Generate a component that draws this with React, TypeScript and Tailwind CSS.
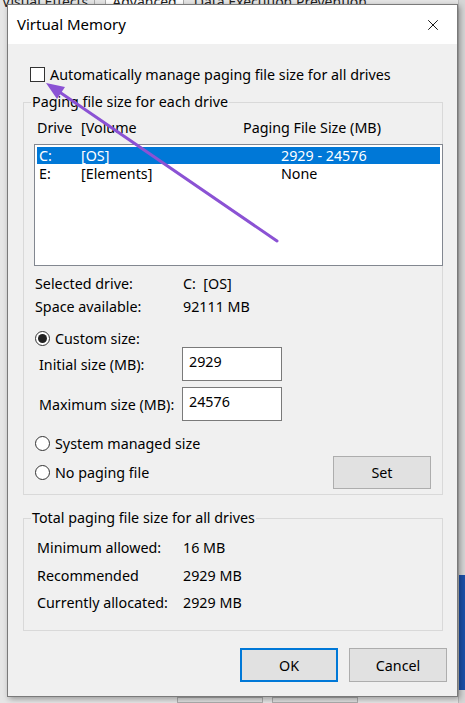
import { X } from 'lucide-react';

const font = { fontFamily: '"Noto Sans", "Open Sans", sans-serif' };

function Radio({ checked, label }: { checked?: boolean; label: string }) {
  return (
    <div className="flex items-center gap-[5px] h-[21px]">
      <div className="w-[15px] h-[15px] rounded-full border border-[#333] bg-white flex items-center justify-center">
        {checked && <div className="w-[9px] h-[9px] rounded-full bg-[#222]" />}
      </div>
      <span>{label}</span>
    </div>
  );
}

function Row({ label, value, valueX }: { label: string; value: string; valueX: string }) {
  return (
    <div className="flex h-[23px] items-center">
      <span className={valueX}>{label}</span>
      <span className="whitespace-pre">{value}</span>
    </div>
  );
}

export default function App() {
  return (
    <div className="relative w-[465px] h-[703px] overflow-hidden bg-[#e6e6e6] text-[14.3px] leading-[21px] text-black" style={font}>
      {/* window behind the dialog */}
      <div className="absolute left-0 top-[-9px] flex gap-[10px] text-[14px] text-[#222] pl-[2px]">
        <span className="pr-[6px] border-r border-[#aaa]">Visual Effects</span>
        <span className="bg-white px-[6px] border-x border-[#aaa]">Advanced</span>
        <span>Data Execution Prevention</span>
      </div>
      <div className="absolute right-0 top-0 w-[7px] h-full bg-[#d6d6d6] border-l border-[#bbb]">
        <div className="mt-[575px] h-[115px] bg-[#1b4fa8]" />
      </div>
      <div className="absolute bottom-0 left-[177px] w-[86px] h-[6px] border border-[#adadad] bg-[#e1e1e1]" />
      <div className="absolute bottom-0 left-[272px] w-[86px] h-[6px] border border-[#adadad] bg-[#e1e1e1]" />

      {/* dialog */}
      <div className="relative ml-[7px] mt-[4px] w-[451px] h-[693px] border border-[#7a7a7a] bg-[#f0f0f0] shadow-[2px_2px_6px_rgba(0,0,0,0.35)] flex flex-col">
        <div className="h-[39px] bg-white flex items-center justify-between pl-[9px] pr-[15px] text-[15px]">
          <span>Virtual Memory</span>
          <X className="w-[18px] h-[18px]" strokeWidth={1.2} />
        </div>

        <div className="flex flex-col pl-[15px] pr-[14px]">
          <div className="flex items-center gap-[5px] mt-[20px] pl-[7px]">
            <div className="w-[15px] h-[15px] border border-[#333] bg-white" />
            <span>Automatically manage paging file size for all drives</span>
          </div>

          <fieldset className="mt-[8px] border border-[#d9d9d9] px-[10px] pb-[8px] h-[402px]">
            <legend className="ml-[-3px] px-[1px] leading-[18px]">Paging file size for each drive</legend>
            <div className="flex h-[26px] items-center pl-[3px] mt-[3px]">
              <span className="w-[44px]">Drive</span>
              <span className="w-[162px]">[Volume</span>
              <span>Paging File Size (MB)</span>
            </div>
            <div className="h-[122px] mt-[4px] border border-[#828790] bg-white p-[2px] mr-[-11px]">
              <div className="flex h-[17px] items-center bg-[#0078d7] text-white pl-[2px]">
                <span className="w-[42px]">C:</span>
                <span className="w-[200px]">[OS]</span>
                <span>2929 - 24576</span>
              </div>
              <div className="flex h-[18px] items-center pl-[2px]">
                <span className="w-[42px]">E:</span>
                <span className="w-[200px]">[Elements]</span>
                <span>None</span>
              </div>
            </div>

            <div className="mt-[6px] pl-[1px]">
              <Row label="Selected drive:" value="C:  [OS]" valueX="w-[148px]" />
              <Row label="Space available:" value="92111 MB" valueX="w-[148px]" />
            </div>

            <div className="mt-[10px] pl-[1px]">
              <Radio checked label="Custom size:" />
            </div>
            <div className="flex items-center mt-[-2px] pl-[5px]">
              <span className="w-[143px]">Initial size (MB):</span>
              <div className="w-[100px] h-[34px] border border-[#7a7a7a] bg-white px-[6px] pt-[3px]">2929</div>
            </div>
            <div className="flex items-center mt-[6px] pl-[5px]">
              <span className="w-[143px]">Maximum size (MB):</span>
              <div className="w-[100px] h-[34px] border border-[#7a7a7a] bg-white px-[6px] pt-[3px]">24576</div>
            </div>
            <div className="mt-[12px] pl-[1px]">
              <Radio label="System managed size" />
            </div>
            <div className="flex items-center justify-between mt-[2px] pl-[1px] pr-[1px]">
              <Radio label="No paging file" />
              <button className="w-[98px] h-[33px] border border-[#adadad] bg-[#e1e1e1]">Set</button>
            </div>
          </fieldset>

          <fieldset className="mt-[14px] border border-[#d9d9d9] px-[13px] h-[122px]">
            <legend className="ml-[-6px] px-[1px] leading-[18px]">Total paging file size for all drives</legend>
            <div className="mt-[9px]">
              <Row label="Minimum allowed:" value="16 MB" valueX="w-[146px]" />
              <div className="h-[5px]" />
              <Row label="Recommended" value="2929 MB" valueX="w-[146px]" />
              <div className="h-[4px]" />
              <Row label="Currently allocated:" value="2929 MB" valueX="w-[146px]" />
            </div>
          </fieldset>

          <div className="flex justify-end gap-[11px] mt-[17px] mr-[-4px]">
            <button className="w-[98px] h-[34px] border-2 border-[#0078d7] bg-[#e1e1e1]">OK</button>
            <button className="w-[98px] h-[34px] border border-[#adadad] bg-[#e1e1e1]">Cancel</button>
          </div>
        </div>
      </div>

      {/* purple annotation arrow */}
      <svg className="absolute inset-0 pointer-events-none" width="465" height="703">
        <line x1="277" y1="241" x2="58" y2="91" stroke="#8b52d4" strokeWidth="3" strokeLinecap="round" />
        <polygon points="46,83 65,87 57,99" fill="#8b52d4" />
      </svg>
    </div>
  );
}
